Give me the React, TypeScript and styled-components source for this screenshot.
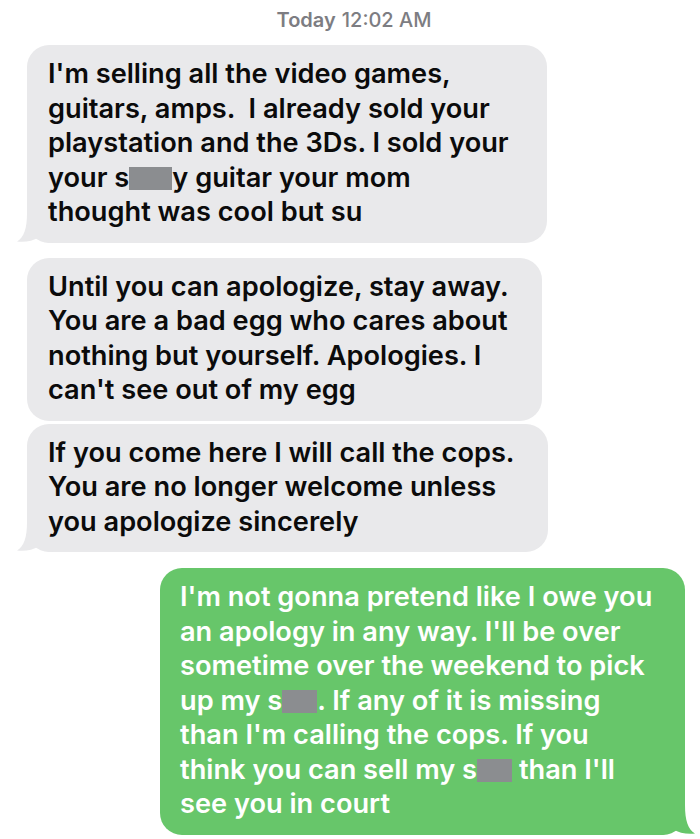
import React from 'react';
import styled, { createGlobalStyle } from 'styled-components';

const GlobalStyle = createGlobalStyle`
  html, body {
    margin: 0;
    padding: 0;
    background: #ffffff;
  }
  body {
    font-family: Inter, "Noto Sans", "Liberation Sans", sans-serif;
    -webkit-font-smoothing: antialiased;
  }
`;

const Thread = styled.div`
  width: 700px;
  height: 839px;
  overflow: hidden;
  display: flex;
  flex-direction: column;
  box-sizing: border-box;
`;

const Stamp = styled.div`
  height: 45px;
  display: flex;
  align-items: center;
  justify-content: center;
  padding-left: 8px;
  padding-bottom: 5px;
  box-sizing: border-box;
  color: #7d7d82;
  font-size: 20px;
  font-weight: 500;
  strong {
    font-weight: 600;
    margin-right: 6px;
  }
`;

const Bubble = styled.div<{ $out?: boolean; $w: number; $gap: number }>`
  position: relative;
  box-sizing: border-box;
  width: ${(p) => p.$w}px;
  margin-top: ${(p) => p.$gap}px;
  margin-left: ${(p) => (p.$out ? 'auto' : '27px')};
  margin-right: ${(p) => (p.$out ? '15px' : '0')};
  padding: 12px 0 13px ${(p) => (p.$out ? '20px' : '21px')};
  border-radius: 22px;
  background: ${(p) => (p.$out ? '#67c66a' : '#e9e9eb')};
  color: ${(p) => (p.$out ? '#ffffff' : '#0b0b0b')};
  font-size: 27.2px;
  font-weight: 560;
  line-height: 34.5px;
`;

const Line = styled.span`
  position: relative;
  z-index: 1;
  display: block;
  white-space: pre;
`;

const Censor = styled.span<{ $w: number }>`
  display: inline-block;
  width: ${(p) => p.$w}px;
  height: 23px;
  background: #8b8d90;
  vertical-align: -3px;
`;

const TailSvg = styled.svg<{ $out?: boolean }>`
  position: absolute;
  bottom: 0;
  z-index: 0;
  ${(p) => (p.$out ? 'right: -10px; transform: scaleX(-1);' : 'left: -10px;')}
`;

const Tail = ({ color, out }: { color: string; out?: boolean }) => (
  <TailSvg $out={out} width="36" height="30" viewBox="0 0 36 30">
    <path
      d="M10 0 C10 16 7 24 0 28.5 C8 29.5 16 28 21.5 24.5 C25 27.5 29 29.6 36 30 L36 0 Z"
      fill={color}
    />
  </TailSvg>
);

export default function App() {
  return (
    <Thread>
      <GlobalStyle />
      <Stamp>
        <strong>Today</strong>12:02 AM
      </Stamp>

      <Bubble $w={520} $gap={0}>
        <Line>I'm selling all the video games,</Line>
        <Line>guitars, amps.  I already sold your</Line>
        <Line>playstation and the 3Ds. I sold your</Line>
        <Line>
          your s<Censor $w={43} />y guitar your mom
        </Line>
        <Line>thought was cool but su</Line>
        <Tail color="#e9e9eb" />
      </Bubble>

      <Bubble $w={515} $gap={15}>
        <Line>Until you can apologize, stay away.</Line>
        <Line>You are a bad egg who cares about</Line>
        <Line>nothing but yourself. Apologies. I</Line>
        <Line>can't see out of my egg</Line>
      </Bubble>

      <Bubble $w={521} $gap={3}>
        <Line>If you come here I will call the cops.</Line>
        <Line>You are no longer welcome unless</Line>
        <Line>you apologize sincerely</Line>
        <Tail color="#e9e9eb" />
      </Bubble>

      <Bubble $out $w={525} $gap={16}>
        <Line>I'm not gonna pretend like I owe you</Line>
        <Line>an apology in any way. I'll be over</Line>
        <Line>sometime over the weekend to pick</Line>
        <Line>
          up my s<Censor $w={35} />. If any of it is missing
        </Line>
        <Line>than I'm calling the cops. If you</Line>
        <Line>
          think you can sell my s<Censor $w={35} /> than I'll
        </Line>
        <Line>see you in court</Line>
        <Tail color="#67c66a" out />
      </Bubble>
    </Thread>
  );
}
